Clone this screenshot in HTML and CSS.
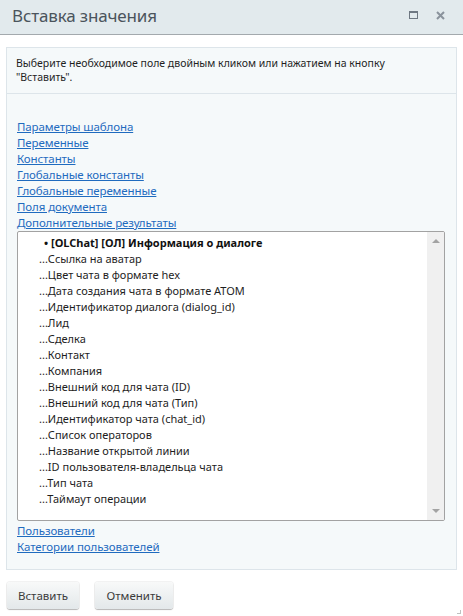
FILE: index.html
```html
<!DOCTYPE html>
<html lang="ru">
<head>
<meta charset="utf-8">
<title>Вставка значения</title>
<link rel="stylesheet" href="styles.css">
</head>
<body>
<div class="dialog">
  <div class="titlebar">
    <div class="title">Вставка значения</div>
    <div class="tools">
      <span class="tool-max"></span>
      <svg class="tool-close" width="9" height="9" viewBox="0 0 9 9"><path d="M1 1L8 8M8 1L1 8" stroke="#8a939c" stroke-width="2"/></svg>
    </div>
  </div>
  <div class="content">
    <div class="panel">
      <div class="hint">Выберите необходимое поле двойным кликом или нажатием на кнопку "Вставить".</div>
      <div class="body">
        <a class="link" href="#">Параметры шаблона</a>
        <a class="link" href="#">Переменные</a>
        <a class="link" href="#">Константы</a>
        <a class="link" href="#">Глобальные константы</a>
        <a class="link" href="#">Глобальные переменные</a>
        <a class="link" href="#">Поля документа</a>
        <a class="link" href="#">Дополнительные результаты</a>
        <div class="listbox">
          <div class="items">
            <div class="item group">• [OLChat] [ОЛ] Информация о диалоге</div>
            <div class="item">...Ссылка на аватар</div>
            <div class="item">...Цвет чата в формате hex</div>
            <div class="item">...Дата создания чата в формате ATOM</div>
            <div class="item">...Идентификатор диалога (dialog_id)</div>
            <div class="item">...Лид</div>
            <div class="item">...Сделка</div>
            <div class="item">...Контакт</div>
            <div class="item">...Компания</div>
            <div class="item">...Внешний код для чата (ID)</div>
            <div class="item">...Внешний код для чата (Тип)</div>
            <div class="item">...Идентификатор чата (chat_id)</div>
            <div class="item">...Список операторов</div>
            <div class="item">...Название открытой линии</div>
            <div class="item">...ID пользователя-владельца чата</div>
            <div class="item">...Тип чата</div>
            <div class="item">...Таймаут операции</div>
          </div>
          <div class="scrollbar">
            <span class="arrow up"></span>
            <span class="arrow down"></span>
          </div>
        </div>
        <a class="link" href="#">Пользователи</a>
        <a class="link" href="#">Категории пользователей</a>
      </div>
    </div>
    <div class="buttons">
      <button class="btn btn-insert">Вставить</button>
      <button class="btn btn-cancel">Отменить</button>
    </div>
  </div>
  <span class="grip"></span>
</div>
</body>
</html>
```
FILE: styles.css
```css
* { box-sizing: border-box; }
html, body { margin: 0; padding: 0; }
body {
  width: 463px;
  height: 616px;
  background: #fff;
  font-family: "Noto Sans", "Open Sans", sans-serif;
  color: #000;
  overflow: hidden;
}
.dialog { position: relative; height: 616px; }
.titlebar {
  height: 35px;
  background: #e2eaed;
  border-bottom: 1px solid #a3a9ad;
  display: flex;
  align-items: center;
  justify-content: space-between;
  padding: 0 18px 0 12px;
}
.title {
  font-size: 17px;
  color: #4b545c;
  letter-spacing: -0.15px;
  margin-top: -4px;
}
.tools { display: flex; align-items: center; gap: 18px; margin-top: -4px; }
.tool-max {
  width: 9px; height: 8px;
  border: 1px solid #6e7882;
  border-top-width: 2px;
}
.tool-close { display: block; }
.content { padding: 12px 6px 0 6px; }
.panel {
  border: 1px solid #dde5ea;
  background: #f5f9fa;
  height: 523px;
}
.hint {
  font-size: 10.5px;
  line-height: 14px;
  color: #1f1f1f;
  padding: 8px 20px 6px 9px;
  height: 46px;
  border-bottom: 1px solid #dde5ea;
}
.body {
  padding: 25px 10px 0 10px;
  display: flex;
  flex-direction: column;
  align-items: flex-start;
}
.link {
  font-size: 11.5px;
  line-height: 16px;
  color: #1f6bbf;
  text-decoration: underline;
  text-underline-offset: 1px;
  letter-spacing: -0.1px;
}
.listbox {
  margin-top: 0;
  margin-bottom: 2px;
  width: 428px;
  height: 290px;
  background: #fff;
  border: 1px solid #a2a2a2;
  border-radius: 2px;
  display: flex;
  overflow: hidden;
}
.items { flex: 1; padding: 3px 0 0 21px; }
.item {
  font-size: 11px;
  line-height: 16px;
  color: #1e1e1e;
  white-space: nowrap;
}
.item.group { font-weight: bold; padding-left: 5px; color: #111; }
.scrollbar {
  width: 17px;
  background: #f0f0f0;
  display: flex;
  flex-direction: column;
  justify-content: space-between;
  align-items: center;
  padding: 7px 0 7px;
}
.arrow { width: 0; height: 0; border-left: 4px solid transparent; border-right: 4px solid transparent; }
.arrow.up { border-bottom: 4px solid #a3a3a3; }
.arrow.down { border-top: 4px solid #a3a3a3; }
.buttons { display: flex; gap: 16px; padding: 12px 0 0 1px; }
.btn {
  font-family: "Noto Sans", "Open Sans", sans-serif;
  font-size: 11.5px;
  color: #3b3b3b;
  height: 27px;
  border: none;
  border-radius: 3px;
  background: linear-gradient(#f8f9f9, #e3e8ea);
  box-shadow: 0 1px 1px rgba(0,0,0,0.25), 0 0 0 1px rgba(0,0,0,0.05);
  padding: 0;
}
.btn-insert { width: 72px; }
.btn-cancel { width: 78px; }
.grip {
  position: absolute;
  right: 2px; bottom: 2px;
  width: 4px; height: 4px;
  border-right: 1px solid #c0c0c0;
  border-bottom: 1px solid #c0c0c0;
}
```
